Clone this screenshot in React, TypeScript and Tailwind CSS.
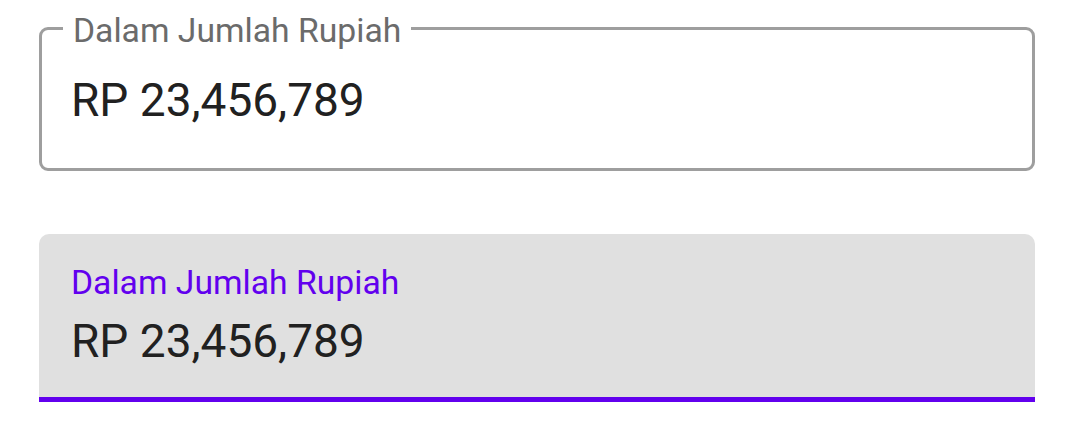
export default function App() {
  return (
    <div className="min-h-screen bg-white pt-[27px] pl-[39px]" style={{ fontFamily: 'Roboto, "Liberation Sans", sans-serif' }}>
      <div className="w-[996px] flex flex-col gap-[63px]">
        {/* Outlined field */}
        <div className="relative h-[144px] rounded-[9px] border-[3px] border-[#9e9e9e] pl-[29px] pt-[47px]">
          <span className="absolute left-[21px] -top-[16px] bg-white px-[10px] text-[33.7px] leading-none text-[#6b6b6b]">
            Dalam Jumlah Rupiah
          </span>
          <div className="text-[46px] leading-none text-[#212121]">RP 23,456,789</div>
        </div>

        {/* Filled field */}
        <div className="h-[168px] rounded-t-[10px] border-b-[5px] border-[#6200ee] bg-[#e0e0e0] pl-[32px] pt-[32px]">
          <div className="text-[33.7px] leading-none text-[#6200ee]">Dalam Jumlah Rupiah</div>
          <div className="mt-[18px] text-[46px] leading-none text-[#212121]">RP 23,456,789</div>
        </div>
      </div>
    </div>
  );
}
